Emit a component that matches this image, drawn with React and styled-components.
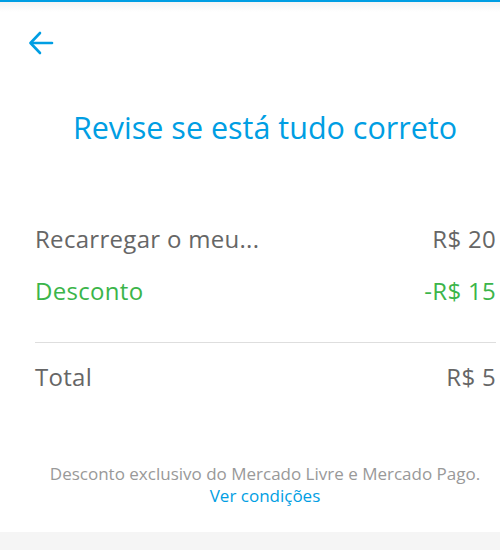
import React from "react";
import styled, { createGlobalStyle } from "styled-components";

const Global = createGlobalStyle`
  html, body { margin: 0; padding: 0; background: #fff; }
  body { font-family: "Open Sans", "Liberation Sans", sans-serif; }
`;

const Screen = styled.div`
  width: 500px;
  height: 550px;
  display: flex;
  flex-direction: column;
  border-top: 2px solid #009ee3;
  box-sizing: border-box;
  overflow: hidden;
`;

const TopBar = styled.div`
  height: 82px;
  display: flex;
  align-items: flex-start;
  padding: 26px 0 0 26px;
  box-sizing: border-box;
  background: linear-gradient(#f3f3f3 0, #fff 10px);
`;

const BackButton = styled.button`
  border: none;
  background: none;
  padding: 0;
  width: 30px;
  height: 30px;
  color: #009ee3;
  display: flex;
  align-items: center;
  justify-content: center;
`;

const Content = styled.div`
  padding-left: 30px;
  display: flex;
  flex-direction: column;
`;

const Title = styled.h1`
  margin: 23px 0 0;
  text-align: center;
  color: #009ee3;
  font-size: 30.5px;
  font-weight: 400;
  line-height: 40px;
`;

const Summary = styled.div`
  margin-top: 65px;
  padding: 0 4px 0 5px;
  display: flex;
  flex-direction: column;
`;

const Row = styled.div`
  display: flex;
  justify-content: space-between;
  align-items: center;
  height: 52px;
  font-size: 24px;
  letter-spacing: 0.3px;
  color: ${(p) => (p.$green ? "#3bb54a" : "#666")};
`;

const Divider = styled.div`
  height: 1px;
  background: #dedede;
  margin: 26px 0 7px;
`;

const Footer = styled.div`
  margin-top: 61px;
  text-align: center;
  font-size: 17px;
  line-height: 22px;
  color: #999;
`;

const Link = styled.a`
  display: block;
  color: #009ee3;
  text-decoration: none;
`;

const BottomBand = styled.div`
  margin-top: auto;
  height: 18px;
  background: #f5f5f5;
`;

export default function App() {
  return (
    <>
      <Global />
      <Screen>
        <TopBar>
          <BackButton aria-label="Voltar">
            <svg width="26" height="24" viewBox="0 0 26 24" fill="none" stroke="currentColor" strokeWidth="2.6" strokeLinecap="round" strokeLinejoin="round">
              <path d="M24 12H3" />
              <path d="M12 2L2.5 12L12 22" />
            </svg>
          </BackButton>
        </TopBar>
        <Content>
          <Title>Revise se está tudo correto</Title>
          <Summary>
            <Row>
              <span>Recarregar o meu...</span>
              <span>R$ 20</span>
            </Row>
            <Row $green>
              <span>Desconto</span>
              <span>-R$ 15</span>
            </Row>
            <Divider />
            <Row>
              <span>Total</span>
              <span>R$ 5</span>
            </Row>
          </Summary>
          <Footer>
            Desconto exclusivo do Mercado Livre e Mercado Pago.
            <Link href="#">Ver condições</Link>
          </Footer>
        </Content>
        <BottomBand />
      </Screen>
    </>
  );
}
